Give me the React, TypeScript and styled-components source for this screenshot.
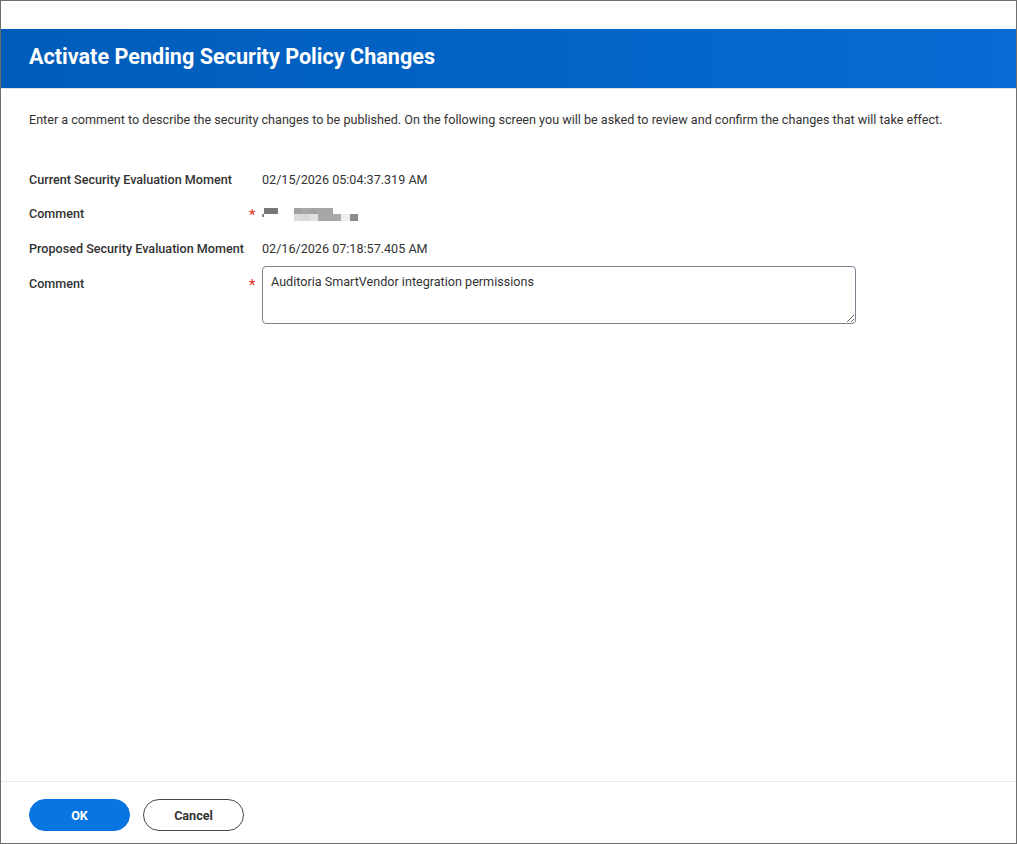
import * as React from "react";
import styled, { createGlobalStyle } from "styled-components";

const GlobalStyle = createGlobalStyle`
  html, body {
    margin: 0;
    padding: 0;
    background: #ffffff;
  }
  body {
    font-family: Roboto, "Liberation Sans", Arial, sans-serif;
    color: #333333;
  }
`;

const Frame = styled.div`
  box-sizing: border-box;
  width: 1017px;
  height: 844px;
  border: 1px solid #6e6e6e;
  display: flex;
  flex-direction: column;
  background: #ffffff;
`;

const TopGap = styled.div`
  height: 28px;
`;

const Header = styled.div`
  box-sizing: border-box;
  height: 60px;
  display: flex;
  align-items: center;
  padding: 0 28px 4px;
  background: linear-gradient(90deg, #005cb9 0%, #0365c8 60%, #066bd3 100%);
  border-bottom: 1px solid #dfe3e8;
`;

const Title = styled.h1`
  margin: 0;
  font-size: 21.6px;
  font-weight: 700;
  color: #ffffff;
`;

const Body = styled.div`
  flex: 1;
  padding: 23px 28px 0;
`;

const Intro = styled.p`
  margin: 0 0 44px;
  font-size: 12.6px;
  line-height: 16px;
  color: #333333;
`;

const Rows = styled.div`
  display: flex;
  flex-direction: column;
  gap: 18px;
`;

const Row = styled.div<{ $extraTop?: number }>`
  display: grid;
  grid-template-columns: 220px 13px 1fr;
  align-items: start;
  min-height: 16px;
  margin-top: ${(p) => p.$extraTop ?? 0}px;
`;

const Label = styled.div`
  font-size: 12.6px;
  line-height: 16px;
  font-weight: 500;
  color: #333333;
`;

const Required = styled.span`
  color: #de2e21;
  font-size: 15px;
  line-height: 15px;
  padding-top: 2px;
`;

const Value = styled.div`
  font-size: 12.6px;
  line-height: 16px;
  color: #333333;
`;

const TextArea = styled.textarea`
  box-sizing: border-box;
  width: 594px;
  height: 58px;
  margin-top: -10px;
  padding: 7px 8px;
  border: 1px solid #7b858f;
  border-radius: 4px;
  font-family: Roboto, "Liberation Sans", Arial, sans-serif;
  font-size: 12.6px;
  line-height: 16px;
  color: #333333;
  resize: both;
  outline: none;
`;

const Footer = styled.div`
  box-sizing: border-box;
  height: 62px;
  border-top: 1px solid #e8eaec;
  display: flex;
  align-items: flex-start;
  gap: 13px;
  padding: 17px 28px 0;
`;

const Button = styled.button<{ $primary?: boolean }>`
  box-sizing: border-box;
  width: 101px;
  height: 32px;
  border-radius: 16px;
  font-family: Roboto, "Liberation Sans", Arial, sans-serif;
  font-size: 12.6px;
  font-weight: 700;
  cursor: pointer;
  border: 1px solid ${(p) => (p.$primary ? "#0875e1" : "#494949")};
  background: ${(p) => (p.$primary ? "#0875e1" : "#ffffff")};
  color: ${(p) => (p.$primary ? "#ffffff" : "#333333")};
`;

const Redacted = styled.svg`
  display: block;
  margin-top: 2px;
`;

// pixelated blocks standing in for the blurred previous comment
const blocks: [number, number, number, number, string][] = [
  [2, 0, 14, 6, "#777777"],
  [0, 6, 2, 3, "#888888"],
  [32, 0, 8, 6, "#a0a0a0"],
  [40, 0, 8, 6, "#a6a6a6"],
  [48, 0, 8, 6, "#a2a2a2"],
  [56, 0, 15, 6, "#a6a6a6"],
  [32, 6, 8, 7, "#dcdcdc"],
  [40, 6, 8, 7, "#d8d8d8"],
  [48, 6, 8, 7, "#e0e0e0"],
  [56, 6, 15, 7, "#a8a8a8"],
  [71, 6, 8, 7, "#aaaaaa"],
  [79, 6, 9, 7, "#eeeeee"],
  [88, 6, 8, 7, "#8c8c8c"],
];

function RedactedComment() {
  return (
    <Redacted width="100" height="13" viewBox="0 0 100 13">
      {blocks.map(([x, y, w, h, c], i) => (
        <rect key={i} x={x} y={y} width={w} height={h} fill={c} />
      ))}
    </Redacted>
  );
}

export default function App() {
  const [comment, setComment] = React.useState("Auditoria SmartVendor integration permissions");
  return (
    <>
      <GlobalStyle />
      <Frame>
        <TopGap />
        <Header>
          <Title>Activate Pending Security Policy Changes</Title>
        </Header>
        <Body>
          <Intro>
            Enter a comment to describe the security changes to be published. On the following screen you will be
            asked to review and confirm the changes that will take effect.
          </Intro>
          <Rows>
            <Row>
              <Label>Current Security Evaluation Moment</Label>
              <span />
              <Value>02/15/2026 05:04:37.319 AM</Value>
            </Row>
            <Row>
              <Label>Comment</Label>
              <Required>*</Required>
              <RedactedComment />
            </Row>
            <Row>
              <Label>Proposed Security Evaluation Moment</Label>
              <span />
              <Value>02/16/2026 07:18:57.405 AM</Value>
            </Row>
            <Row $extraTop={1}>
              <Label>Comment</Label>
              <Required>*</Required>
              <TextArea value={comment} onChange={(e) => setComment(e.target.value)} />
            </Row>
          </Rows>
        </Body>
        <Footer>
          <Button $primary>OK</Button>
          <Button>Cancel</Button>
        </Footer>
      </Frame>
    </>
  );
}
